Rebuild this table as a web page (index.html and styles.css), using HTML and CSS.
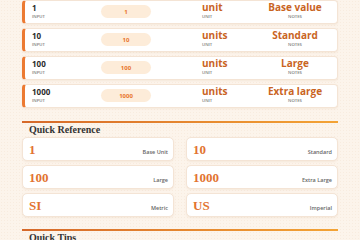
FILE: index.html
```html
<!DOCTYPE html>
<html lang="en">
<head>
    <meta charset="UTF-8">
    <meta name="viewport" content="width=device-width, initial-scale=1.0">
    <title>Unit Table</title>
    <link rel="stylesheet" href="styles.css">
</head>
<body>
    <div class="page">
        <!-- Conversion rows -->
        <div class="rows">
            <div class="row">
                <div class="cell">
                    <span class="value">1</span>
                    <span class="label">Input</span>
                </div>
                <div class="cell"><span class="pill">1</span></div>
                <div class="cell">
                    <span class="accent">unit</span>
                    <span class="label">Unit</span>
                </div>
                <div class="cell center">
                    <span class="accent">Base value</span>
                    <span class="label">Notes</span>
                </div>
            </div>
            <div class="row">
                <div class="cell">
                    <span class="value">10</span>
                    <span class="label">Input</span>
                </div>
                <div class="cell"><span class="pill">10</span></div>
                <div class="cell">
                    <span class="accent">units</span>
                    <span class="label">Unit</span>
                </div>
                <div class="cell center">
                    <span class="accent">Standard</span>
                    <span class="label">Notes</span>
                </div>
            </div>
            <div class="row">
                <div class="cell">
                    <span class="value">100</span>
                    <span class="label">Input</span>
                </div>
                <div class="cell"><span class="pill">100</span></div>
                <div class="cell">
                    <span class="accent">units</span>
                    <span class="label">Unit</span>
                </div>
                <div class="cell center">
                    <span class="accent">Large</span>
                    <span class="label">Notes</span>
                </div>
            </div>
            <div class="row">
                <div class="cell">
                    <span class="value">1000</span>
                    <span class="label">Input</span>
                </div>
                <div class="cell"><span class="pill">1000</span></div>
                <div class="cell">
                    <span class="accent">units</span>
                    <span class="label">Unit</span>
                </div>
                <div class="cell center">
                    <span class="accent">Extra large</span>
                    <span class="label">Notes</span>
                </div>
            </div>
        </div>

        <!-- Quick Reference -->
        <div class="section">
            <h2 class="section-title">Quick Reference</h2>
            <div class="ref-grid">
                <div class="ref-card"><span class="ref-value">1</span><span class="ref-label">Base Unit</span></div>
                <div class="ref-card"><span class="ref-value">10</span><span class="ref-label">Standard</span></div>
                <div class="ref-card"><span class="ref-value">100</span><span class="ref-label">Large</span></div>
                <div class="ref-card"><span class="ref-value">1000</span><span class="ref-label">Extra Large</span></div>
                <div class="ref-card"><span class="ref-value">SI</span><span class="ref-label">Metric</span></div>
                <div class="ref-card"><span class="ref-value">US</span><span class="ref-label">Imperial</span></div>
            </div>
        </div>

        <!-- Quick Tips -->
        <div class="section tips">
            <h2 class="section-title">Quick Tips</h2>
        </div>
    </div>
</body>
</html>
```

FILE: styles.css
```css
body {
    margin: 0;
    padding: 0;
    font-family: 'Open Sans', 'Noto Sans', sans-serif;
    background-color: #fcf4eb;
    background-image: radial-gradient(rgba(230, 200, 170, 0.18) 0.6px, transparent 0.8px);
    background-size: 3px 3px;
    color: #2b2b2b;
}

.page {
    padding: 0 22px;
}

.rows {
    display: flex;
    flex-direction: column;
    gap: 4px;
}

.row {
    display: grid;
    grid-template-columns: 69px 101px 1fr 66px;
    align-items: start;
    height: 24px;
    box-sizing: border-box;
    padding: 1px 9px 0 7px;
    background: #ffffff;
    border: 1px solid #f4e4d5;
    border-left: 3px solid #ec7a32;
    border-radius: 4px;
    box-shadow: 0 1px 2px rgba(200, 150, 110, 0.12);
}

.cell {
    display: flex;
    flex-direction: column;
}

.cell.center {
    align-items: center;
}

.value {
    font-size: 8px;
    font-weight: 700;
    line-height: 11px;
    color: #2b2b2b;
}

.accent {
    font-size: 10px;
    font-weight: 700;
    line-height: 11px;
    color: #c9641f;
}

.label {
    font-size: 4.3px;
    font-weight: 600;
    line-height: 6px;
    text-transform: uppercase;
    color: #7a7a7a;
}

.pill {
    display: flex;
    align-items: center;
    justify-content: center;
    width: 50px;
    height: 13px;
    margin-top: 3px;
    border-radius: 7px;
    background: #fdecd9;
    color: #e8752a;
    font-size: 6px;
    font-weight: 700;
}

/* Sections with a gradient rule on top */
.section {
    margin-top: 13px;
    padding-top: 2px;
    background: linear-gradient(90deg, #d6692a, #f3a335) top left / 100% 2px no-repeat;
}

.section-title {
    margin: 0;
    padding: 0 7px;
    font-family: 'Liberation Serif', serif;
    font-size: 10px;
    font-weight: 700;
    line-height: 14px;
    color: #333;
}

.ref-grid {
    display: grid;
    grid-template-columns: 1fr 1fr;
    column-gap: 12px;
    row-gap: 4px;
}

.ref-card {
    display: flex;
    align-items: baseline;
    justify-content: space-between;
    height: 24px;
    box-sizing: border-box;
    padding: 4px 5px 0 6px;
    background: #ffffff;
    border: 1px solid #f4e4d5;
    border-radius: 5px;
    box-shadow: 0 1px 2px rgba(200, 150, 110, 0.12);
}

.ref-value {
    font-family: 'Liberation Serif', serif;
    font-size: 13px;
    font-weight: 700;
    color: #e27330;
}

.ref-label {
    font-size: 5.5px;
    font-weight: 600;
    color: #666;
}

.tips {
    margin-top: 12px;
}
```
